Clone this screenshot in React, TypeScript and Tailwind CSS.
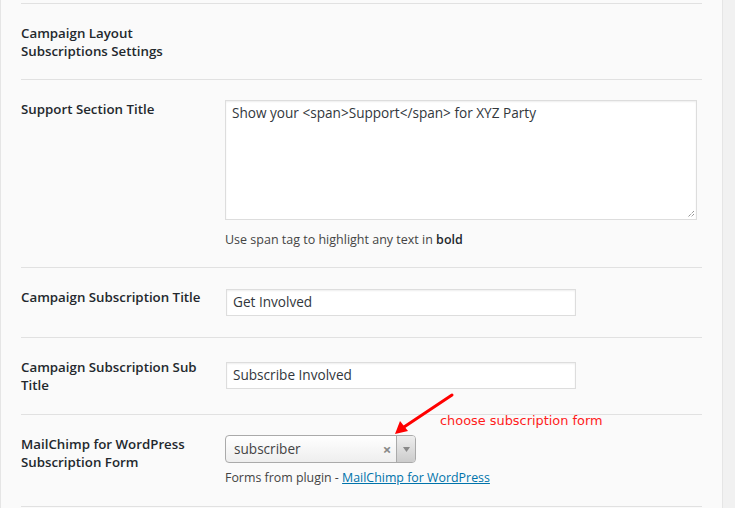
export default function App() {
  const font = { fontFamily: '"Open Sans", "Noto Sans", sans-serif' }
  return (
    <div className="flex h-[508px] w-[735px] overflow-hidden bg-[#f1f1f1] text-[13.6px] text-[#23282d]" style={font}>
      <div className="w-[723px] shrink-0 border-r border-l border-[#e5e5e5] bg-[#fafafa] pl-[20px] pr-[20px]">
        <div className="mt-[3px] border-t border-[#e1e1e1]" />

        {/* Campaign Layout heading row */}
        <div className="flex h-[76px] items-start border-b border-[#e1e1e1] pt-[20px]">
          <div className="w-[204px] text-[13.3px] font-semibold leading-[18px]">
            Campaign Layout
            <br />
            Subscriptions Settings
          </div>
        </div>

        {/* Support section title */}
        <div className="flex h-[188px] border-b border-[#e1e1e1]">
          <div className="w-[204px] pt-[20px] text-[13.3px] font-semibold leading-[18px]">Support Section Title</div>
          <div className="pt-[20px]">
            <div className="relative h-[120px] w-[472px] border border-[#dddddd] bg-white px-[6px] pt-[2px] leading-[20px] text-[#32373c] shadow-[inset_0_1px_2px_rgba(0,0,0,0.07)]">
              Show your &lt;span&gt;Support&lt;/span&gt; for XYZ Party
              <svg className="absolute right-[1px] bottom-[1px]" width="9" height="9" viewBox="0 0 9 9">
                <path d="M8 2 L2 8 M8 5 L5 8" stroke="#666" strokeWidth="1" strokeDasharray="1 1" />
              </svg>
            </div>
            <p className="mt-[11px] text-[12.5px] leading-[18px] text-[#444]">
              Use span tag to highlight any text in <b className="font-semibold text-[#23282d]">bold</b>
            </p>
          </div>
        </div>

        {/* Campaign subscription title */}
        <div className="flex h-[70px] border-b border-[#e1e1e1]">
          <div className="w-[205px] pt-[20px] text-[13.3px] font-semibold leading-[18px]">Campaign Subscription Title</div>
          <div className="pt-[21px]">
            <div className="flex h-[27px] w-[350px] items-center border border-[#dddddd] bg-white px-[6px] pb-[1px] text-[#32373c] shadow-[inset_0_1px_2px_rgba(0,0,0,0.07)]">
              Get Involved
            </div>
          </div>
        </div>

        {/* Campaign subscription sub title */}
        <div className="flex h-[77px] border-b border-[#e1e1e1]">
          <div className="w-[205px] pt-[20px] text-[13.3px] font-semibold leading-[18px]">
            Campaign Subscription Sub
            <br />
            Title
          </div>
          <div className="pt-[24px]">
            <div className="flex h-[27px] w-[350px] items-center border border-[#dddddd] bg-white px-[6px] pb-[1px] text-[#32373c] shadow-[inset_0_1px_2px_rgba(0,0,0,0.07)]">
              Subscribe Involved
            </div>
          </div>
        </div>

        {/* MailChimp row */}
        <div className="relative flex h-[92px] border-b border-[#e1e1e1]">
          <div className="w-[204px] pt-[20px] text-[13.3px] font-semibold leading-[18px]">
            MailChimp for WordPress
            <br />
            Subscription Form
          </div>
          <div className="pt-[20px]">
            <div className="flex h-[28px] w-[191px] items-stretch overflow-hidden rounded-[4px] border border-[#aaaaaa] bg-gradient-to-b from-white to-[#eeeeee]">
              <span className="flex flex-1 items-center pl-[8px] text-[#444]">subscriber</span>
              <span className="flex w-[18px] items-center justify-center text-[15px] font-bold leading-none text-[#888]">×</span>
              <span className="flex w-[19px] items-center justify-center border-l border-[#aaaaaa] bg-gradient-to-b from-[#eeeeee] to-[#cccccc]">
                <svg width="7" height="5" viewBox="0 0 7 5">
                  <path d="M0 0 L7 0 L3.5 5 Z" fill="#888" />
                </svg>
              </span>
            </div>
            <p className="mt-[6px] text-[12.4px] leading-[18px] text-[#444]">
              Forms from plugin - <a className="text-[#0073aa] underline">MailChimp for WordPress</a>
            </p>
          </div>

          {/* annotation */}
          <span className="absolute top-[-4px] left-[419px] text-[#ff1a1a]" style={{ fontFamily: '"DejaVu Sans", sans-serif', fontSize: '12.9px' }}>
            choose subscription form
          </span>
          <svg className="absolute top-[-22px] left-[370px]" width="64" height="44" viewBox="0 0 64 44">
            <path d="M61 2 L10 36" stroke="#ff0000" strokeWidth="3" strokeLinecap="round" />
            <path d="M4 41 L9 28 L17 38 Z" fill="#ff0000" />
          </svg>
        </div>
      </div>
    </div>
  )
}
